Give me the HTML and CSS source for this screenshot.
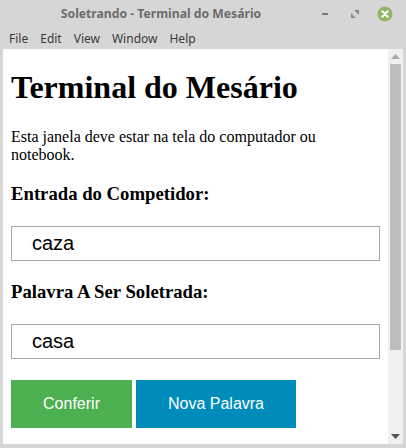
FILE: index.html
```html
<!DOCTYPE html>
<html lang="pt">
<head>
<meta charset="utf-8">
<title>Soletrando - Terminal do Mesário</title>
<link rel="stylesheet" href="styles.css">
</head>
<body>
<div class="window">
  <div class="titlebar">
    <div class="title">Soletrando - Terminal do Mesário</div>
    <div class="controls">
      <span class="ctl-min"></span>
      <svg class="ctl-max" width="8" height="8" viewBox="0 0 8 8"><path d="M3 0H8V5Z M0 3V8H5Z" fill="#8a8a8a"/></svg>
      <svg class="ctl-close" width="16" height="16" viewBox="0 0 16 16"><circle cx="8" cy="8" r="7.5" fill="#8fb666"/><path d="M5.3 5.3L10.7 10.7M10.7 5.3L5.3 10.7" stroke="#fff" stroke-width="2" stroke-linecap="round"/></svg>
    </div>
  </div>
  <div class="menubar">
    <span class="menu-item">File</span>
    <span class="menu-item">Edit</span>
    <span class="menu-item">View</span>
    <span class="menu-item">Window</span>
    <span class="menu-item">Help</span>
  </div>
  <div class="frame">
    <div class="page">
      <h1 class="page-title">Terminal do Mesário</h1>
      <p class="intro">Esta janela deve estar na tela do computador ou notebook.</p>
      <h3 class="field-label">Entrada do Competidor:</h3>
      <input class="field-input" type="text" value="caza">
      <h3 class="field-label field-label-next">Palavra A Ser Soletrada:</h3>
      <input class="field-input" type="text" value="casa">
      <div class="actions">
        <button class="btn btn-green">Conferir</button>
        <button class="btn btn-blue">Nova Palavra</button>
      </div>
    </div>
    <div class="scrollbar">
      <svg class="arrow" width="9" height="5" viewBox="0 0 9 5"><path d="M0 5L4.5 0L9 5Z" fill="#a8a8a8"/></svg>
      <div class="track"><div class="thumb"></div></div>
      <svg class="arrow" width="9" height="5" viewBox="0 0 9 5"><path d="M0 0L4.5 5L9 0Z" fill="#505050"/></svg>
    </div>
  </div>
</div>
</body>
</html>
```

FILE: styles.css
```css
* { box-sizing: border-box; }
html, body { margin: 0; padding: 0; }
body { width: 406px; height: 448px; overflow: hidden; background: #d4d4d4; }

.window {
  width: 406px;
  height: 448px;
  display: flex;
  flex-direction: column;
  background: #d6d6d6;
  padding: 0 3px 4px 3px;
}

.titlebar {
  height: 27px;
  display: flex;
  align-items: center;
  font-family: "Noto Sans", "DejaVu Sans", sans-serif;
}
.title {
  width: 318px;
  text-align: center;
  font-size: 12.2px;
  font-weight: bold;
  color: #6c6c6c;
  padding-right: 2px;
}
.controls {
  display: flex;
  align-items: center;
  margin-left: auto;
  margin-right: 10px;
}
.ctl-min {
  width: 6px;
  height: 2px;
  background: #7a7a7a;
  margin-right: 23px;
}
.ctl-max { margin-right: 18px; }

.menubar {
  height: 22px;
  display: flex;
  align-items: center;
  padding-left: 6px;
  font-family: "Noto Sans", "DejaVu Sans", sans-serif;
  font-size: 12px;
  color: #3a3a3a;
}
.menu-item { margin-right: 12px; }

.frame {
  flex: 1;
  display: flex;
  min-height: 0;
  background: #fff;
}

.page {
  flex: 1;
  padding: 0 8px;
  overflow: hidden;
  font-family: "Liberation Serif", "Times New Roman", serif;
  color: #000;
}

.page-title {
  font-size: 32px;
  font-weight: bold;
  margin: 20px 0 22px;
}
.intro {
  font-size: 16px;
  margin: 0 0 18.7px;
}
.field-label {
  font-size: 18.72px;
  font-weight: bold;
  margin: 0 0 21.5px;
}
.field-label-next { margin-top: 19.5px; }

.field-input {
  display: block;
  width: 100%;
  height: 35px;
  padding: 5px 20px;
  border: 1px solid #a9a9a9;
  border-radius: 0;
  font-family: "Liberation Sans", Arial, sans-serif;
  font-size: 20px;
  color: #000;
  background: #fff;
  outline: none;
  margin: 0;
}

.actions {
  display: flex;
  gap: 4px;
  margin-top: 20.5px;
}
.btn {
  border: none;
  color: #fff;
  font-family: "Liberation Sans", Arial, sans-serif;
  font-size: 16px;
  padding: 0;
  height: 48px;
  line-height: 18px;
  white-space: nowrap;
  text-align: center;
}
.btn-green { background: #4caf50; width: 121px; }
.btn-blue { background: #008cba; width: 160px; }

.scrollbar {
  width: 15px;
  background: #f0f0f0;
  display: flex;
  flex-direction: column;
  align-items: center;
  padding: 5px 0 5px;
}
.arrow { flex: none; }
.track {
  flex: 1;
  width: 100%;
  padding: 5px 2px 0 2px;
}
.thumb {
  height: 286px;
  background: #bebebe;
}
```
